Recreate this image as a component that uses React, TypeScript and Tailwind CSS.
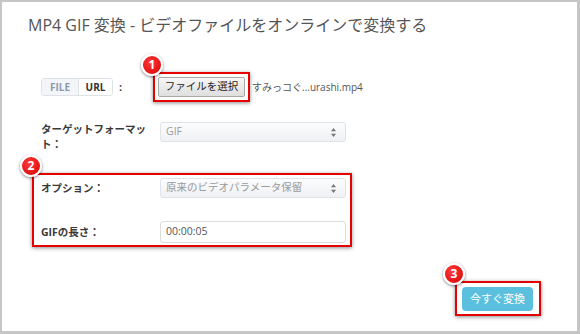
import type { ReactNode } from 'react'

function Badge({ n }: { n: number }) {
  return (
    <span className="absolute left-[-14px] top-[-20px] flex h-[22px] w-[22px] items-center justify-center rounded-full border-2 border-white bg-[radial-gradient(circle_at_40%_35%,#ff3b3b,#d60000)] text-[12px] font-bold leading-none text-white shadow-[0_1px_3px_rgba(0,0,0,0.5)]">
      {n}
    </span>
  )
}

function Marked({ n, className, children }: { n: number; className: string; children: ReactNode }) {
  return (
    <div className={`relative border-2 border-[#e60000] shadow-[0_1px_4px_rgba(0,0,0,0.45)] ${className}`}>
      <Badge n={n} />
      {children}
    </div>
  )
}

function Arrows() {
  return (
    <svg width="5" height="9" viewBox="0 0 5 9" className="fill-[#777]">
      <path d="M2.5 0 L5 3.3 L0 3.3 Z" />
      <path d="M0 5.7 L5 5.7 L2.5 9 Z" />
    </svg>
  )
}

function Select({ value }: { value: string }) {
  return (
    <div className="flex h-[20px] w-[186px] items-center justify-between rounded-[3px] border border-[#dfe3e8] bg-gradient-to-b from-[#fbfcfd] to-[#eff1f4] pl-[5px] pr-[9px] text-[10.5px] text-[#9a9a9a]">
      <span>{value}</span>
      <Arrows />
    </div>
  )
}

export default function App() {
  return (
    <div className="box-border h-[334px] w-[580px] border-t-2 border-l-2 border-r-[3px] border-b-[3px] border-[#c6c6c6] bg-white font-['Open_Sans','Noto_Sans_CJK_JP',sans-serif] text-[#333]">
      <h1 className="pl-[26px] pt-[12px] text-[16px] font-normal leading-[22px] text-[#555]">
        MP4 GIF 変換 - ビデオファイルをオンラインで変換する
      </h1>

      <div className="mt-[36px] pl-[39px]">
        {/* file / url */}
        <div className="flex items-center">
          <div className="flex w-[112px] items-center">
            <div className="flex h-[18px] w-[72px] overflow-hidden rounded-[3px] border border-[#dde2e8] text-[10px] font-bold">
              <span className="flex w-[37px] items-center justify-center border-r border-[#dde2e8] bg-[#f3f5f8] text-[#8d9aae]">FILE</span>
              <span className="flex flex-1 items-center justify-center bg-white text-[#333]">URL</span>
            </div>
            <span className="ml-[6px] text-[11px] font-bold text-[#444]">:</span>
          </div>
          <Marked n={1} className="p-[3px]">
            <button className="flex h-[20px] w-[87px] items-center justify-center rounded-[2px] border border-[#a9a9a9] bg-gradient-to-b from-[#f7f7f7] to-[#dedede] text-[10.5px] text-[#222]">
              ファイルを選択
            </button>
          </Marked>
          <span className="ml-[2px] text-[10px] text-[#555]">すみっコぐ...urashi.mp4</span>
        </div>

        {/* target format */}
        <div className="mt-[20px] flex items-start">
          <div className="mr-[9px] w-[110px] text-[10.5px] font-bold leading-[15px] text-[#3a3a3a]">ターゲットフォーマット：</div>
          <Select value="GIF" />
        </div>

        {/* options */}
        <Marked n={2} className="ml-[-9px] mt-[21px] w-[320px] pb-[2px] pl-[7px] pt-[3px]">
          <div className="flex items-center">
            <div className="mr-[9px] w-[110px] text-[10.5px] font-bold leading-[15px] text-[#3a3a3a]">オプション：</div>
            <Select value="原来のビデオパラメータ保留" />
          </div>
          <div className="mt-[23px] flex items-center">
            <div className="mr-[9px] w-[110px] text-[10.5px] font-bold leading-[15px] text-[#3a3a3a]">GIFの長さ：</div>
            <div className="flex h-[22px] w-[186px] items-center rounded-[3px] border border-[#dcdcdc] bg-white pl-[5px] text-[10.5px] text-[#555]">
              00:00:05
            </div>
          </div>
        </Marked>

        {/* convert */}
        <div className="mt-[34px] flex justify-end pr-[36px]">
          <Marked n={3} className="pb-[3px] pl-[5px] pr-[6px] pt-[4px]">
            <button className="flex h-[24px] w-[71px] items-center justify-center rounded-[4px] bg-[#5bc0de] text-[11px] font-normal text-white">
              今すぐ変換
            </button>
          </Marked>
        </div>
      </div>
    </div>
  )
}
